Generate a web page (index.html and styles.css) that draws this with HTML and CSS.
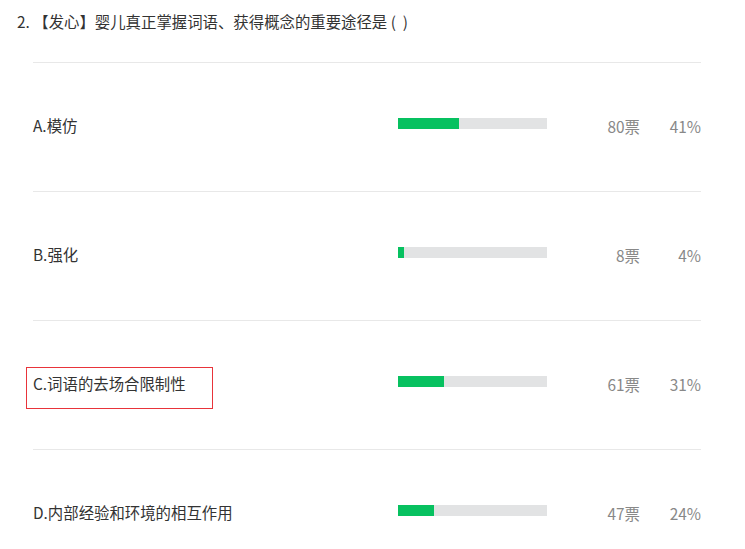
FILE: index.html
```html
<!DOCTYPE html>
<html lang="zh-CN">
<head>
  <meta charset="UTF-8">
  <title>投票结果</title>
  <link rel="stylesheet" href="styles.css">
</head>
<body>
  <h2 class="question">2. 【发心】婴儿真正掌握词语、获得概念的重要途径是&nbsp;(&nbsp;&nbsp;)</h2>
  <ul class="options">
    <li class="option">
      <span class="label">A.模仿</span>
      <div class="bar"><div class="fill" style="width: 41%"></div></div>
      <span class="votes">80票</span>
      <span class="percent">41%</span>
    </li>
    <li class="option">
      <span class="label">B.强化</span>
      <div class="bar"><div class="fill" style="width: 4%"></div></div>
      <span class="votes">8票</span>
      <span class="percent">4%</span>
    </li>
    <li class="option">
      <span class="label marked">C.词语的去场合限制性</span>
      <div class="bar"><div class="fill" style="width: 31%"></div></div>
      <span class="votes">61票</span>
      <span class="percent">31%</span>
    </li>
    <li class="option">
      <span class="label">D.内部经验和环境的相互作用</span>
      <div class="bar"><div class="fill" style="width: 24%"></div></div>
      <span class="votes">47票</span>
      <span class="percent">24%</span>
    </li>
  </ul>
</body>
</html>
```

FILE: styles.css
```css
html {
  overflow: hidden;
}
body {
  margin: 0;
  background: #fff;
  color: #333;
  font-family: "Noto Sans CJK SC", "Noto Sans", sans-serif;
  font-size: 15.4px;
}
.question {
  margin: 0;
  padding: 10px 0 0 17px;
  font-size: 15.4px;
  font-weight: normal;
  line-height: 22px;
  color: #333;
}
.options {
  list-style: none;
  margin: 30px 44px 0 33px;
  padding: 0;
}
.option {
  display: flex;
  align-items: center;
  height: 128px;
  border-top: 1px solid #e8e8e8;
  line-height: 22px;
}
.label {
  flex: 1;
  position: relative;
  top: -2px;
}
.label.marked::after {
  content: "";
  position: absolute;
  left: -7px;
  top: -5px;
  width: 185px;
  height: 40px;
  border: 1px solid #e8343a;
}
.bar {
  width: 149px;
  height: 11px;
  background: #e2e3e4;
  margin-bottom: 7px;
}
.fill {
  height: 100%;
  background: #07c160;
}
.votes,
.percent {
  position: relative;
  top: -1px;
  text-align: right;
  color: #888;
}
.votes {
  width: 93px;
}
.percent {
  width: 61px;
}
```
